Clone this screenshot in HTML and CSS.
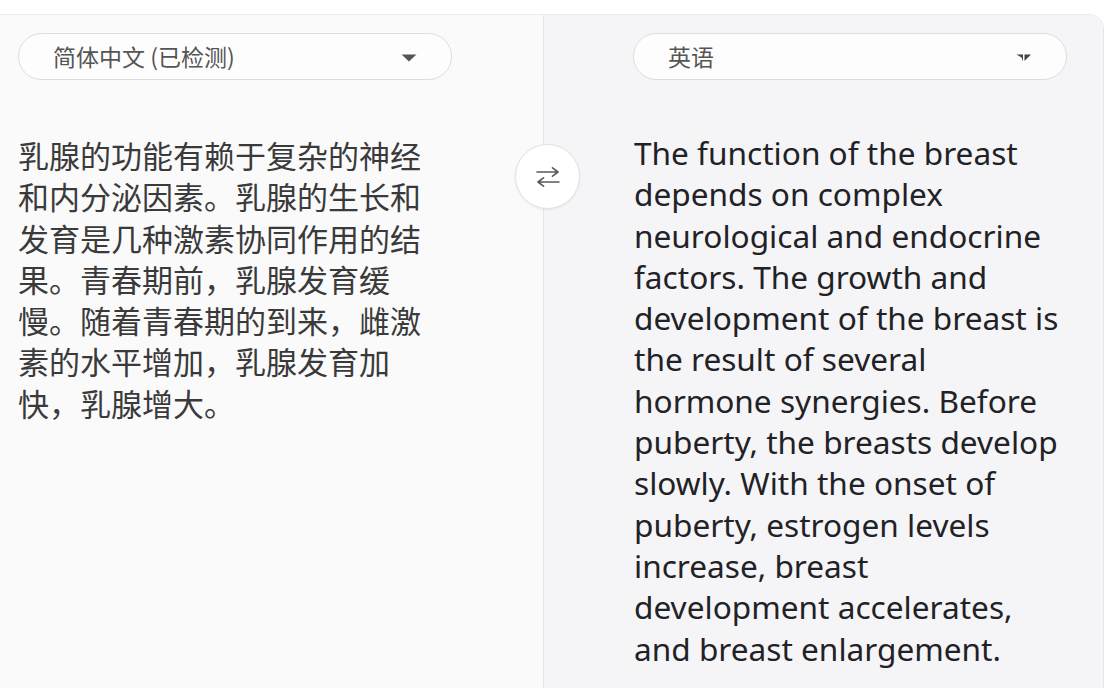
FILE: index.html
```html
<!DOCTYPE html>
<html lang="zh-CN">
<head>
<meta charset="utf-8">
<title>翻译</title>
<link rel="stylesheet" href="styles.css">
</head>
<body>
<div class="page">
  <div class="translator">
    <section class="pane pane-src">
      <div class="lang-pill">
        <span class="lang-name">简体中文 (已检测)</span>
        <svg class="caret" width="16" height="8" viewBox="0 0 16 8"><path d="M0.5 0.5 H15.5 L8 7.5 Z" fill="#555"/></svg>
      </div>
      <p class="src-text">乳腺的功能有赖于复杂的神经和内分泌因素。乳腺的生长和发育是几种激素协同作用的结果。青春期前，乳腺发育缓慢。随着青春期的到来，雌激素的水平增加，乳腺发育加快，乳腺增大。</p>
    </section>
    <section class="pane pane-tgt">
      <div class="lang-pill">
        <span class="lang-name">英语</span>
        <svg class="caret caret-split" width="16" height="8" viewBox="0 0 16 8"><path d="M0.5 0.5 H7 V7.5 L5.5 3.5 Z" fill="#444"/><path d="M8.5 0.5 H15 L8.5 7 Z" fill="#444"/></svg>
      </div>
      <p class="tgt-text">The function of the breast depends on complex neurological and endocrine factors. The growth and development of the breast is the result of several hormone synergies. Before puberty, the breasts develop slowly. With the onset of puberty, estrogen levels increase, breast development accelerates, and breast enlargement.</p>
    </section>
    <button class="swap" type="button" aria-label="交换语言">
      <svg width="26" height="20" viewBox="0 0 26 20" fill="none" stroke="#5a5a5a" stroke-width="1.6" stroke-linecap="round" stroke-linejoin="round">
        <path d="M2 5 H23 M17.5 0.8 L23 5 L17.5 9.2"/>
        <path d="M24 15 H3 M8.5 10.8 L3 15 L8.5 19.2"/>
      </svg>
    </button>
  </div>
</div>
</body>
</html>
```
FILE: styles.css
```css
html, body {
  margin: 0;
  padding: 0;
  background: #ffffff;
}

.page {
  padding-top: 14px;
  height: 674px;
  overflow: hidden;
}

.translator {
  position: relative;
  display: grid;
  grid-template-columns: 543px 560px;
  width: 1104px;
  height: 700px;
  box-sizing: border-box;
  border-top: 1px solid #ececee;
  border-right: 1px solid #e6e6e8;
  border-top-right-radius: 15px;
  overflow: hidden;
}

.pane {
  box-sizing: border-box;
  padding-top: 18px;
}

.pane-src {
  background: #fafafb;
  padding-left: 18px;
}

.pane-tgt {
  background: #f5f5f7;
  border-left: 1px solid #e7e7e9;
  padding-left: 89px;
}

.lang-pill {
  display: flex;
  align-items: center;
  justify-content: space-between;
  box-sizing: border-box;
  width: 434px;
  height: 47px;
  padding: 0 34px 0 34px;
  background: #fdfdfd;
  border: 1px solid #dcdcde;
  border-radius: 24px;
}

.lang-name {
  font-family: "Noto Sans CJK SC", "Noto Sans", sans-serif;
  font-size: 23px;
  color: #555555;
  line-height: 1;
}

.caret {
  display: block;
  margin-top: 2px;
}

.src-text {
  margin: 54px 0 0 0;
  width: 420px;
  font-family: "Noto Sans CJK SC", sans-serif;
  font-size: 31px;
  line-height: 41.3px;
  color: #3a3a3a;
}

.tgt-text {
  margin: 52px 0 0 1px;
  width: 436px;
  font-family: "Noto Sans", "Open Sans", sans-serif;
  font-size: 31.6px;
  line-height: 41.3px;
  color: #222226;
}

.swap {
  position: absolute;
  left: 515px;
  top: 129px;
  width: 65px;
  height: 65px;
  padding: 0;
  border-radius: 50%;
  border: 1px solid #e2e2e4;
  background: #ffffff;
  box-shadow: 0 1px 3px rgba(0, 0, 0, 0.06);
  display: flex;
  align-items: center;
  justify-content: center;
}

.swap svg {
  display: block;
}
```
